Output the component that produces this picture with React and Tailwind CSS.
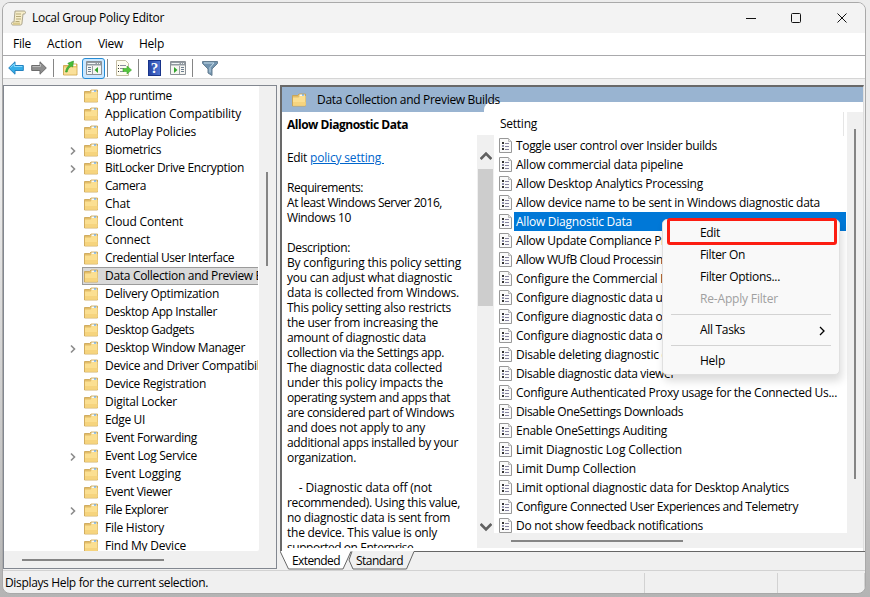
import React, { useLayoutEffect, useRef, useState } from "react";

const tree = [
  { name: "App runtime", w: 67 },
  { name: "Application Compatibility", w: 136 },
  { name: "AutoPlay Policies", w: 91 },
  { name: "Biometrics", w: 56, open: true },
  { name: "BitLocker Drive Encryption", w: 139, open: true },
  { name: "Camera", w: 41 },
  { name: "Chat", w: 25 },
  { name: "Cloud Content", w: 78 },
  { name: "Connect", w: 45 },
  { name: "Credential User Interface", w: 129 },
  { name: "Data Collection and Preview Builds", w: 183, selected: true },
  { name: "Delivery Optimization", w: 114 },
  { name: "Desktop App Installer", w: 112 },
  { name: "Desktop Gadgets", w: 89 },
  { name: "Desktop Window Manager", w: 140, open: true },
  { name: "Device and Driver Compatibility", w: 167 },
  { name: "Device Registration", w: 101 },
  { name: "Digital Locker", w: 72 },
  { name: "Edge UI", w: 40 },
  { name: "Event Forwarding", w: 92 },
  { name: "Event Log Service", w: 92, open: true },
  { name: "Event Logging", w: 76 },
  { name: "Event Viewer", w: 67 },
  { name: "File Explorer", w: 63, open: true },
  { name: "File History", w: 59 },
  { name: "Find My Device", w: 81 },
];

const settings = [
  { name: "Toggle user control over Insider builds", w: 201 },
  { name: "Allow commercial data pipeline", w: 167 },
  { name: "Allow Desktop Analytics Processing", w: 187 },
  { name: "Allow device name to be sent in Windows diagnostic data", w: 304 },
  { name: "Allow Diagnostic Data", w: 116, selected: true },
  { name: "Allow Update Compliance Processing", w: 195 },
  { name: "Allow WUfB Cloud Processing", w: 153 },
  { name: "Configure the Commercial ID", w: 156 },
  { name: "Configure diagnostic data upload endpoint" },
  { name: "Configure diagnostic data opt-in change" },
  { name: "Configure diagnostic data opt-in settings" },
  { name: "Disable deleting diagnostic data" },
  { name: "Disable diagnostic data viewer", w: 159 },
  { name: "Configure Authenticated Proxy usage for the Connected Us...", w: 321 },
  { name: "Disable OneSettings Downloads", w: 167 },
  { name: "Enable OneSettings Auditing", w: 151 },
  { name: "Limit Diagnostic Log Collection", w: 166 },
  { name: "Limit Dump Collection", w: 120 },
  { name: "Limit optional diagnostic data for Desktop Analytics", w: 273 },
  { name: "Configure Connected User Experiences and Telemetry", w: 282 },
  { name: "Do not show feedback notifications", w: 187 },
];

const description = [
  ["Requirements:", 76],
  ["At least Windows Server 2016,", 155],
  ["Windows 10", 64],
  ["", 0],
  ["Description:", 63],
  ["By configuring this policy setting", 174],
  ["you can adjust what diagnostic", 165],
  ["data is collected from Windows.", 172],
  ["This policy setting also restricts", 164],
  ["the user from increasing the", 151],
  ["amount of diagnostic data", 139],
  ["collection via the Settings app.", 157],
  ["The diagnostic data collected", 155],
  ["under this policy impacts the", 156],
  ["operating system and apps that", 163],
  ["are considered part of Windows", 167],
  ["and does not apply to any", 138],
  ["additional apps installed by your", 171],
  ["organization.", 69],
  ["", 0],
  ["    - Diagnostic data off (not", 145],
  ["recommended). Using this value,", 173],
  ["no diagnostic data is sent from", 163],
  ["the device. This value is only", 150],
  ["supported on Enterprise,", 129],
];

// Spreads the letters so that the text is w pixels wide
function Label({ w, className = "", children }) {
  const ref = useRef(null);
  const [spacing, setSpacing] = useState(null);

  useLayoutEffect(() => {
    const el = ref.current;
    if (!w || !el) return;
    el.style.letterSpacing = "0px";
    const natural = el.getBoundingClientRect().width;
    setSpacing((w - natural) / children.length);
  }, [w, children]);

  return (
    <span
      ref={ref}
      className={`inline-block shrink-0 whitespace-pre ${className}`}
      style={spacing === null ? undefined : { letterSpacing: `${spacing}px` }}
    >
      {children}
    </span>
  );
}

function Folder() {
  return (
    <svg className="shrink-0" width="15" height="14" viewBox="0 0 15 14">
      <path d="M.5 2.5h5l1.5-1.5h6.5v12H.5z" fill="#e3bd68" stroke="#c9a14b" strokeWidth=".8" />
      <path d="M7.5 1.5h5v2h-5z" fill="#f4fafd" />
      <path d="M10 1.5h2v1h-2z" fill="#3d8fe0" />
      <path d="M1 4.500h5.500l1.500-1.500h5.500v9.500H1z" fill="#fbdf91" />
      <path d="M1 9h12.500v3.500H1z" fill="#f6d47e" />
    </svg>
  );
}

function PolicyIcon() {
  return (
    <svg className="shrink-0" width="13" height="15" viewBox="0 0 13 15">
      <path d="M.5.5h9l3 3v11H.5z" fill="#fafafa" stroke="#989898" />
      <path d="M9.500.5v3h3" fill="#e4e4e4" stroke="#bbb" />
      <path d="M3 4h2v2H3zM3 10h2v2H3z" fill="#333" />
      <path d="M3 7h2v2H3z" fill="#8d8da8" />
      <path d="M6 5.500h4M6 8.500h4M6 11.500h4" stroke="#8784a0" />
    </svg>
  );
}

function Chevron({ className, d, size = 10, width = 1.6 }) {
  return (
    <svg className={className} width={size} height={size} viewBox="0 0 10 10" fill="none" stroke="currentColor" strokeWidth={width}>
      <path d={d} />
    </svg>
  );
}

function PaneIcon({ flip }) {
  return (
    <svg width="16" height="14" viewBox="0 0 16 14">
      <path d="M.5.500h15v13H.5z" fill="#f6f6f2" stroke="#8b9197" />
      <path d="M1 1h14v3.500H1z" fill="#929aa1" />
      <path d="M1.500 2.500h8M11 2.500h1M13 2.500h1" stroke="#f2f5f6" />
      <path d={flip ? "M9.500 5v8" : "M6.500 5v8"} stroke="#9a9fa4" />
      <path d={flip ? "M11 6.500h3M11 8.500h3M11 10.500h3" : "M2 6.500h3M2 8.500h3M2 10.500h3"} stroke="#6d7f91" />
      <path d={flip ? "M4 6v6l3.500-3z" : "M12 6v6L8.500 9z"} fill="#31a52c" />
    </svg>
  );
}

function Divider() {
  return <div className="h-[18px] w-px shrink-0 bg-[#858585]" />;
}

function Toolbar() {
  return (
    <div className="box-content flex h-[20px] items-center border-b border-[#d5d5d5] bg-white pl-[5px] pt-[2px]">
      <svg width="16" height="14" viewBox="0 0 16 14">
        <path d="M.7 7 7 .8v3.700h8.300v5H7v3.700z" fill="#35aee8" stroke="#2482bf" />
        <path d="M2.500 6.500 6.300 3v2.500h8" stroke="#8bdcff" fill="none" />
      </svg>
      <svg className="ml-[7px]" width="16" height="14" viewBox="0 0 16 14">
        <path d="M15.300 7 9 .8v3.700H.7v5H9v3.700z" fill="#8e8e8e" stroke="#6c6c6c" />
        <path d="M1.500 5.500h8V3" stroke="#bbb" fill="none" />
      </svg>
      <div className="ml-[6px]"><Divider /></div>
      <svg className="ml-[9px]" width="15" height="16" viewBox="0 0 15 16">
        <path d="M.5 5.500h5l1-1.500h7.500v11H.5z" fill="#efc86e" stroke="#c79e45" strokeWidth=".8" />
        <path d="M9 4.500h4v1.500H9z" fill="#fff" />
        <path d="M1 7.500h12.500v7H1z" fill="#fae09a" />
        <path d="M2.500 12C3 8.500 4.500 6.500 6.500 5L4.800 3.300 10.500 1l-.8 6L8.200 6.200C6 7.500 4.500 9.500 4.200 12z" fill="#48bd38" stroke="#2c9325" strokeWidth=".6" />
      </svg>
      <div className="ml-[4px] flex h-[21px] w-[23px] shrink-0 items-center justify-center rounded-[3px] border border-[#268cd5] bg-[#cce8ff]">
        <PaneIcon />
      </div>
      <div className="ml-[2px]"><Divider /></div>
      <svg className="ml-[8px]" width="16" height="16" viewBox="0 0 16 16">
        <path d="M.5.500h9l3 3v12H.5z" fill="#fffdf0" stroke="#c4bda4" />
        <path d="M2 5.500h1M2 8.500h1M2 11.500h1" stroke="#333" />
        <path d="M4 5.500h6M4 8.500h4M4 11.500h4" stroke="#8e8ea0" />
        <path d="M7 8.500h4V6l4.500 4-4.500 4v-2.500H7z" fill="#56c63d" stroke="#39a52b" strokeWidth=".6" />
      </svg>
      <div className="ml-[6px]"><Divider /></div>
      <div className="ml-[9px] flex h-4 w-[13px] items-center justify-center border border-[#17338a] bg-linear-to-r from-[#2745a5] to-[#4f74d2] font-['Liberation_Serif',serif] text-[15px] leading-none font-bold tracking-normal text-white">?</div>
      <div className="ml-[9px]"><PaneIcon flip /></div>
      <div className="ml-[6px]"><Divider /></div>
      <svg className="ml-[9px]" width="16" height="15" viewBox="0 0 16 15">
        <path d="M.5.500h15v2L10 8v6.500L6 12V8L.5 2.500z" fill="#7193ae" stroke="#667f92" />
        <path d="M2 2h10L8 6.500v5" stroke="#c6dce9" fill="none" />
      </svg>
    </div>
  );
}

function Tree() {
  return (
    <div className="flex h-[484px] w-[274px] shrink-0 flex-col border border-[#828790] bg-[#f0f0f0]">
      <div className="flex h-[465px]">
        <div className="w-[255px] overflow-hidden rounded-br-[2px] bg-white pt-px pr-px">
          <div className="overflow-hidden">
            {tree.map((item) => (
              <div key={item.name} className="flex h-[18px] items-center pl-[64px]">
                <div className="w-[14px] shrink-0 text-[#8b8b8b]">
                  {item.open && <Chevron d="M3 1.500 6.500 5 3 8.500" className="relative top-[1px]" />}
                </div>
                <div
                  className={
                    item.selected
                      ? "flex h-[18px] w-[220px] shrink-0 items-center border border-[#9b9b9b] bg-[#d9d9d9] pl-px"
                      : "flex h-[18px] items-center pl-[2px]"
                  }
                >
                  <Folder />
                  <Label w={item.w} className="ml-[6px]">{item.name}</Label>
                </div>
              </div>
            ))}
          </div>
        </div>
        <div className="pt-[86px] pl-[7px]">
          <div className="h-[94px] w-[2px] bg-[#858585]" />
        </div>
      </div>
      <div className="pt-[8px] pl-[18px]">
        <div className="h-[2px] w-[142px] bg-[#858585]" />
      </div>
    </div>
  );
}

function Description() {
  return (
    <div className="flex h-[436px] w-[212px] shrink-0 flex-col overflow-hidden">
      <div className="h-[23px] shrink-0 pt-[5px] pl-[5px] leading-[15px] font-bold">
        <Label w={121}>Allow Diagnostic Data</Label>
      </div>
      <div className="flex min-h-0 flex-1">
        <div className="w-[195px] overflow-hidden pt-[15px] pl-[5px] leading-[15px]">
          <div className="mb-[15px] flex h-[15px]">
            <Label w={20}>Edit</Label>
            <Label w={74} className="ml-[3px] text-[#0066cc] underline">{"policy setting "}</Label>
          </div>
          {description.map(([line, w], i) => (
            <div key={i} className="h-[15px]">
              {line && <Label w={w}>{line}</Label>}
            </div>
          ))}
        </div>
        <div className="flex w-[17px] flex-col items-center bg-[#f0f0f0]">
          <Chevron d="M.5 7.500 5 3l4.500 4.500" size={12} width={2.3} className="mt-[15px] text-[#606060]" />
          <div className="mt-[7px] h-[137px] w-[15px] bg-[#cdcdcd]" />
          <Chevron d="M.5 2.500 5 7l4.500-4.500" size={12} width={2.3} className="mt-auto mb-[15px] text-[#606060]" />
        </div>
      </div>
    </div>
  );
}

function SettingsList() {
  return (
    <div className="flex min-w-0 flex-1 flex-col bg-[#f0f0f0]">
      <div className="flex h-[421px]">
        <div className="w-[353px] shrink-0 overflow-hidden bg-white">
          <div className="flex h-[24px] w-[350px] items-center border-r border-[#e5e5e5] pl-[6px]">
            <Label w={37}>Setting</Label>
          </div>
          {settings.map((item) => (
            <div key={item.name} className="flex h-[19px] items-center pl-[5px]">
              <PolicyIcon />
              <div
                className={
                  item.selected
                    ? "ml-[2px] flex h-[19px] w-[332px] items-center bg-[#0078d7] pl-[2px] text-white"
                    : "ml-[4px] flex items-center"
                }
              >
                <Label w={item.w}>{item.name}</Label>
              </div>
            </div>
          ))}
        </div>
        <div className="pt-[17px] pl-[7px]">
          <div className="h-[350px] w-[2px] bg-[#858585]" />
        </div>
      </div>
      <div className="pt-[7px] pl-[17px]">
        <div className="h-[2px] w-[172px] bg-[#858585]" />
      </div>
    </div>
  );
}

function ContextMenu() {
  return (
    <div className="absolute top-[219px] left-[662px] z-10 h-[156px] w-[178px] rounded-[5px] border border-[#e0e0e0] bg-[#f9f9f9] pt-[2px] shadow-[2px_6px_9px_rgba(0,0,0,0.14)]">
      <div className="flex h-[22px] items-center pl-[37px]"><Label w={20}>Edit</Label></div>
      <div className="flex h-[22px] items-center pl-[37px]"><Label w={45}>Filter On</Label></div>
      <div className="flex h-[22px] items-center pl-[37px]"><Label w={80}>Filter Options...</Label></div>
      <div className="flex h-[22px] items-center pl-[37px] text-[#a0a0a0]"><Label w={78}>Re-Apply Filter</Label></div>
      <div className="mx-2 my-1 h-px bg-[#d3d3d3]" />
      <div className="flex h-[22px] items-center justify-between pr-[12px] pl-[37px]">
        <Label w={45}>All Tasks</Label>
        <Chevron d="M3 1 7 5 3 9" width={1.3} className="relative top-px" />
      </div>
      <div className="mx-2 my-1 h-px bg-[#d3d3d3]" />
      <div className="flex h-[22px] items-center pl-[37px]"><Label w={25}>Help</Label></div>
      <div className="absolute top-[-2px] left-[4px] h-[27px] w-[170px] rounded-[3px] border-[3px] border-[#fc1d12]" />
    </div>
  );
}

function Tabs() {
  return (
    <div className="relative h-[19px]">
      <svg className="absolute top-0 left-0" width="585" height="19" viewBox="0 0 585 19">
        <path d="M0 0 8 18.500H63L70 0z" fill="#fff" />
        <path d="M0 0 8.500 18H63L71 .5M134 .5H585M72 .5 69 9l4 9h53.500L134 .5" fill="none" stroke="#666" />
      </svg>
      <div className="relative flex h-[19px] items-center">
        <div className="ml-[12px] w-[64px]"><Label w={48}>Extended</Label></div>
        <Label w={47}>Standard</Label>
      </div>
    </div>
  );
}

export default function App() {
  return (
    <div className="relative h-[597px] w-[870px] overflow-hidden bg-linear-to-b from-[#ececec] from-30% to-[#b4b4b4] pt-[2px] pl-[2px] font-['Open_Sans','Noto_Sans',sans-serif] text-[12px] leading-[16px] tracking-[-0.25px] text-black">
      <div className="h-[592px] w-[864px] overflow-hidden rounded-[8px] border border-[#a9a9a9] bg-[#f0f0f0]">
        <div className="flex h-[30px] items-center bg-[#f3f3f3] pl-[8px]">
          <svg width="15" height="16" viewBox="0 0 15 16">
            <path d="M4 1h9c2 0 2 3 0 3h-1l-1 9c0 2-1 2-2 2H2c-2 0-2-3 0-3h1z" fill="#f6edc9" stroke="#a39c84" strokeWidth=".9" />
            <path d="M5 4h5M5 6.500h5M5 9h5M4.500 11.500h4" stroke="#b5a978" />
            <path d="M2 12.500h7V15H2z" fill="#d8c98f" />
          </svg>
          <Label w={132} className="ml-[6px]">Local Group Policy Editor</Label>
          <svg className="mr-[17px] ml-auto" width="102" height="12" viewBox="0 0 102 12" fill="none" stroke="#111">
            <path d="M0 6.500h10" />
            <rect x="45.500" y="1.500" width="9" height="9" rx="1" />
            <path d="m91.500 1.500 9 9m0-9-9 9" />
          </svg>
        </div>
        <div className="flex h-[23px] items-center border-b border-[#a9a9ac] bg-white pl-[10px]">
          <div className="w-[34px]"><Label w={18}>File</Label></div>
          <div className="w-[51px]"><Label w={35}>Action</Label></div>
          <div className="w-[41px]"><Label w={25}>View</Label></div>
          <Label w={25}>Help</Label>
        </div>
        <Toolbar />
        <div className="flex gap-[3px] pt-[6px]">
          <Tree />
          <div className="w-[585px]">
            <div className="h-[466px] w-[584px] border-2 border-r border-b-0 border-[#696969] border-r-[#dfdfdf] bg-white">
              <div className="flex bg-[#99b4d1]">
                <div className="flex h-[25px] w-[202px] items-center pl-[10px]">
                  <Folder />
                  <Label w={183} className="z-10 ml-[10px]">Data Collection and Preview Builds</Label>
                </div>
                <div className="mt-[15px] h-[10px] flex-1 rounded-tl-[8px] bg-white" />
              </div>
              <div className="flex h-[436px]">
                <Description />
                <SettingsList />
              </div>
            </div>
            <Tabs />
          </div>
        </div>
        <div className="flex h-[24px] items-center border-t border-[#d2d2d2] pl-[2px]">
          <Label w={203}>Displays Help for the current selection.</Label>
          <div className="ml-auto h-[20px] w-[133px] border-l border-[#d2d2d2]" />
          <div className="h-[20px] w-[88px] border-x border-[#d2d2d2]" />
        </div>
      </div>
      <ContextMenu />
    </div>
  );
}
